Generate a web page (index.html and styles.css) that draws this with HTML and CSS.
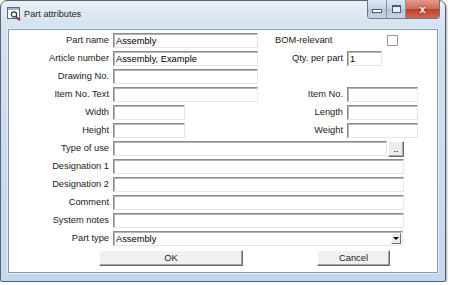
FILE: index.html
```html
<!DOCTYPE html>
<html lang="en">
  <head>
    <meta charset="UTF-8" />
    <title>Part attributes</title>
    <link rel="stylesheet" href="styles.css">
  </head>
  <body>
    <div class="window">
      <div class="titlebar">
        <svg class="app-icon" width="14" height="14" viewBox="0 0 14 14">
          <rect x="0.5" y="0.5" width="12" height="11" fill="#fff" stroke="#5b6a7d" />
          <rect x="1" y="1" width="11" height="2" fill="#9bb3cf" />
          <circle cx="7" cy="7.5" r="2.6" fill="none" stroke="#333" stroke-width="1.2" />
          <line x1="9" y1="9.5" x2="11.5" y2="12" stroke="#333" stroke-width="1.4" />
          <circle cx="12" cy="12.3" r="1.4" fill="#d0302a" />
        </svg>
        <span class="title">Part attributes</span>
        <div class="caption">
          <span class="cap min"><i></i></span>
          <span class="cap max"><i></i></span>
          <span class="cap close">x</span>
        </div>
      </div>

      <div class="client">
        <div class="form">
          <label>Part name</label>
          <input class="field" type="text" value="Assembly" />
          <span class="side-label">BOM-relevant</span>
          <span class="check"></span>

          <label>Article number</label>
          <input class="field" type="text" value="Assembly, Example" />
          <label>Qty. per part</label>
          <input class="field qty" type="text" value="1" />

          <label>Drawing No.</label>
          <input class="field" type="text" />
          <span></span>
          <span></span>

          <label>Item No. Text</label>
          <input class="field" type="text" />
          <label>Item No.</label>
          <input class="field" type="text" />

          <label>Width</label>
          <input class="field short" type="text" />
          <label>Length</label>
          <input class="field" type="text" />

          <label>Height</label>
          <input class="field short" type="text" />
          <label>Weight</label>
          <input class="field" type="text" />

          <label>Type of use</label>
          <div class="wide browse">
            <input class="field" type="text" />
            <button class="dots">..</button>
          </div>

          <label>Designation 1</label>
          <input class="field wide" type="text" />

          <label>Designation 2</label>
          <input class="field wide" type="text" />

          <label>Comment</label>
          <input class="field wide" type="text" />

          <label>System notes</label>
          <input class="field wide" type="text" />

          <label>Part type</label>
          <div class="field wide combo">
            <span class="combo-text">Assembly</span>
            <span class="combo-arrow"></span>
          </div>
        </div>

        <div class="actions">
          <button class="btn ok">OK</button>
          <button class="btn cancel">Cancel</button>
        </div>
      </div>
    </div>
  </body>
</html>
```

FILE: styles.css
```css
body {
  margin: 0;
  background: #fff;
  font-family: "Liberation Sans", Arial, sans-serif;
  font-size: 9.3px;
  color: #1a1a1a;
}

.window {
  width: 446px;
  height: 282px;
  box-sizing: border-box;
  border: 1px solid #59636f;
  border-radius: 7px 7px 2px 2px;
  background: linear-gradient(#eaf0f7, #d3e1f0 26px, #c3d7ee);
  display: flex;
  flex-direction: column;
  box-shadow: 1px 1px 2px rgba(0, 0, 0, 0.35);
}

.titlebar {
  height: 28px;
  display: flex;
  align-items: flex-start;
}

.app-icon {
  margin: 6px 0 0 6px;
}

.title {
  margin: 8px 0 0 3px;
  font-size: 9.2px;
  color: #1e1e1e;
}

.caption {
  margin-left: auto;
  margin-right: 5px;
  margin-top: -1px;
  display: flex;
  border: 1px solid #6a7888;
  border-top: none;
  border-radius: 0 0 4px 4px;
  overflow: hidden;
}

.cap {
  height: 18px;
  display: flex;
  align-items: center;
  justify-content: center;
  box-sizing: border-box;
}

.min,
.max {
  width: 19px;
  background: linear-gradient(#dfe7f0, #c6d3e2 50%, #b4c4d6 51%, #c8d6e6);
  border-right: 1px solid #8393a6;
}

.min i {
  width: 8px;
  height: 2px;
  margin-top: 4px;
  border: 1px solid #505b69;
  background: #fff;
}

.max i {
  width: 7px;
  height: 5px;
  border: 1px solid #505b69;
  border-top-width: 2px;
  background: #e8eef5;
}

.close {
  width: 33px;
  background: linear-gradient(#e39a8b, #cf6b59 50%, #bd3e2b 51%, #cf6a52);
  color: #fff;
  font-weight: bold;
  font-size: 11px;
  text-shadow: 0 0 2px #5a1a12;
}

.client {
  flex: 1;
  margin: 0 7px 8px;
  background: #fff;
  border: 1px solid #8498b3;
  box-shadow: 0 0 0 1px #e4eef9;
  padding-top: 3px;
}

.form {
  display: grid;
  grid-template-columns: 100px 145px 81px 71px;
  grid-auto-rows: 15px;
  column-gap: 4px;
  row-gap: 3px;
}

.form label {
  text-align: right;
  line-height: 15px;
  white-space: nowrap;
}

.side-label {
  line-height: 15px;
  margin-left: 13px;
  white-space: nowrap;
}

.check {
  width: 9px;
  height: 9px;
  margin: 2px 0 0 40px;
  border: 1px solid #9a9a9a;
  background: #fff;
}

.field {
  box-sizing: border-box;
  height: 15px;
  margin: 0;
  padding: 0 2px;
  font: inherit;
  color: #000;
  background: #fff;
  border: 1px solid;
  border-color: #8c8c8c #e6e6e6 #e6e6e6 #8c8c8c;
  box-shadow: inset 1px 1px 0 #b4b4b4;
  outline: none;
}

.short {
  width: 72px;
}

.qty {
  width: 35px;
}

.wide {
  grid-column: 2 / span 3;
  width: 291px;
}

.browse {
  display: flex;
  gap: 1px;
}

.browse .field {
  width: 274px;
}

.dots {
  width: 16px;
  height: 16px;
  padding: 0;
  font: inherit;
  line-height: 8px;
  background: #ececec;
  border: 1px solid;
  border-color: #fff #6b6b6b #6b6b6b #fff;
  box-shadow: inset -1px -1px 0 #a8a8a8;
}

.combo {
  width: 290px;
  display: flex;
  align-items: center;
  padding-right: 1px;
}

.combo-text {
  flex: 1;
}

.combo-arrow {
  width: 10px;
  height: 11px;
  box-sizing: border-box;
  background: #ececec;
  border: 1px solid;
  border-color: #fff #6b6b6b #6b6b6b #fff;
  display: flex;
  align-items: center;
  justify-content: center;
}

.combo-arrow::after {
  content: "";
  border-left: 3px solid transparent;
  border-right: 3px solid transparent;
  border-top: 3px solid #000;
}

.actions {
  display: flex;
  margin-top: 4px;
  padding-left: 90px;
  gap: 74px;
}

.btn {
  height: 16px;
  padding: 0;
  font: inherit;
  color: #1a1a1a;
  background: #f0f0f0;
  border: 1px solid;
  border-color: #fff #6b6b6b #6b6b6b #fff;
  box-shadow: inset -1px -1px 0 #a3a3a3;
}

.ok {
  width: 144px;
}

.cancel {
  width: 73px;
}
```
